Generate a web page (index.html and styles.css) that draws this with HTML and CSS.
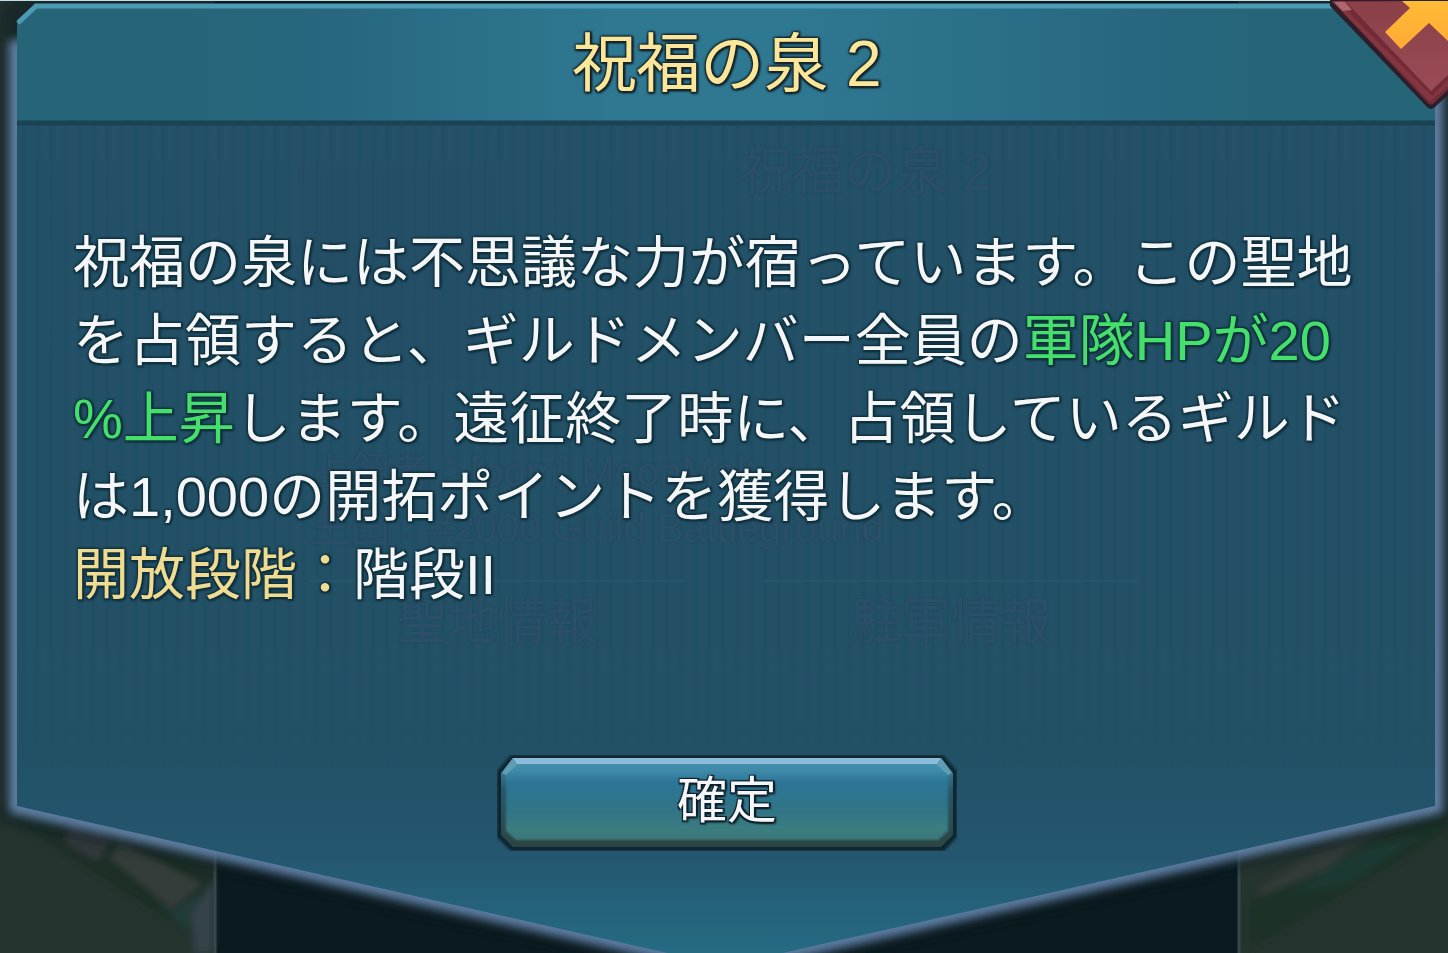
FILE: index.html
```
<!DOCTYPE html>
<html lang="ja">
<head>
    <meta charset="UTF-8">
    <meta name="viewport" content="width=device-width, initial-scale=1.0">
    <title>祝福の泉 2</title>
    <link rel="stylesheet" href="styles.css">
</head>
<body>

<div id="stage">
    <svg class="scene" viewBox="0 0 1448 953" preserveAspectRatio="none" aria-hidden="true">
        <defs>
            <linearGradient id="panel-fill" x1="0" y1="0" x2="0" y2="966" gradientUnits="userSpaceOnUse">
                <stop offset="0" stop-color="#225168"/>
                <stop offset="0.78" stop-color="#225166"/>
                <stop offset="0.88" stop-color="#24566e"/>
                <stop offset="1" stop-color="#266d86"/>
            </linearGradient>
            <linearGradient id="header-fill" x1="0" y1="0" x2="1" y2="0">
                <stop offset="0" stop-color="#266577"/>
                <stop offset="0.1" stop-color="#266577"/>
                <stop offset="0.22" stop-color="#27677f"/>
                <stop offset="0.42" stop-color="#2f7892"/>
                <stop offset="0.55" stop-color="#2f7892"/>
                <stop offset="0.8" stop-color="#27677f"/>
                <stop offset="0.9" stop-color="#266577"/>
                <stop offset="1" stop-color="#266577"/>
            </linearGradient>
            <linearGradient id="stripe-fade" x1="0" y1="0" x2="0" y2="1">
                <stop offset="0" stop-color="#fff"/>
                <stop offset="0.8" stop-color="#fff"/>
                <stop offset="1" stop-color="#000"/>
            </linearGradient>
            <pattern id="stripes" width="14" height="20" patternUnits="userSpaceOnUse">
                <rect width="5" height="20" fill="#30566d" opacity="0.2"/>
                <rect x="8" width="3" height="20" fill="#1c4b5c" opacity="0.15"/>
            </pattern>
            <mask id="stripe-mask">
                <rect x="17" y="126" width="1418" height="650" fill="url(#stripe-fade)"/>
            </mask>
            <filter id="glow" x="-5%" y="-5%" width="110%" height="110%">
                <feGaussianBlur stdDeviation="5"/>
            </filter>
            <filter id="soft"><feGaussianBlur stdDeviation="3"/></filter>
        </defs>

        <!-- ground behind the panel -->
        <rect width="1448" height="953" fill="#0b1a1f"/>
        <rect width="215" height="953" fill="#26342f"/>
        <rect x="1238" width="210" height="953" fill="#26342f"/>
        <g filter="url(#soft)">
            <path d="M0 812L215 950V860L17 800z" fill="#1c2e25"/>
            <path d="M64 842L72 822L112 838L100 860L92 859z" fill="#30393a"/>
            <path d="M110 858L120 842L202 884L172 909z" fill="#343c3b"/>
            <path d="M146 892L172 912L200 890L190 934z" fill="#213b37"/>
            <path d="M192 912L213 880V953H194z" fill="#35434a"/>
            <path d="M1250 950L1448 832V806L1250 900z" fill="#1d3026"/>
            <path d="M1258 888L1320 850L1372 832L1330 868L1262 896z" fill="#323a39"/>
            <path d="M1290 894L1360 850L1426 832L1350 884z" fill="#1e3933"/>
        </g>
        <path d="M215 840V953M1239 840V953" stroke="#34464e" stroke-width="3"/>

        <!-- panel -->
        <path d="M17 20L35 4H1435V806L725 966L17 806z" fill="none" stroke="#0c1a20" stroke-width="36" opacity="0.5" filter="url(#glow)"/>
        <path d="M17 40V806L725 966L1435 806V20" fill="none" stroke="#6d90bb" stroke-width="16" opacity="0.85" filter="url(#glow)"/>
        <path d="M17 20L35 4H1435V806L725 966L17 806z" fill="url(#panel-fill)"/>
        <rect x="17" y="126" width="1418" height="650" fill="url(#stripes)" mask="url(#stripe-mask)"/>
        <rect x="294" y="164" width="204" height="220" fill="#284b66" stroke="#2b4f68" stroke-width="6" opacity="0.25"/>
        <path d="M17 22L36 5H1435V122H17z" fill="url(#header-fill)"/>
        <path d="M18 23L36 6H1435" fill="none" stroke="#4d9ab4" stroke-width="5"/>
        <path d="M17 123H1435" stroke="#1c4353" stroke-width="5"/>
        <path d="M0 0H1448" stroke="#c3dde4" stroke-width="2"/>
    </svg>

    <!-- the dialog underneath shows through faintly -->
    <div class="under" aria-hidden="true">
        <div class="under-title">祝福の泉 2</div>
        <div class="under-info">
            <div>占領者：[oom] MoonMelt</div>
            <div>王国：#2000 Guild Battleground</div>
        </div>
        <div class="under-tabs">
            <div>聖地情報</div>
            <div>駐軍情報</div>
        </div>
    </div>

    <div class="dialog" role="dialog" aria-labelledby="dialog-title">
        <h1 id="dialog-title">祝福の泉 2</h1>
        <div class="message">
            <p>祝福の泉には不思議な力が宿っています。この聖地<br>を占領すると、ギルドメンバー全員の<span class="bonus">軍隊HPが20<br>%上昇</span>します。遠征終了時に、占領しているギルド<br>は1,000の開拓ポイントを獲得します。</p>
            <p><span class="label">開放段階：</span>階段II</p>
        </div>
        <button id="ok-button">
            <svg viewBox="0 0 460 96" preserveAspectRatio="none" aria-hidden="true">
                <defs>
                    <linearGradient id="ok-fill" x1="0" y1="0" x2="0" y2="1">
                        <stop offset="0" stop-color="#4691ad"/>
                        <stop offset="0.12" stop-color="#3f8aa9"/>
                        <stop offset="0.28" stop-color="#2d7496"/>
                        <stop offset="0.6" stop-color="#307487"/>
                        <stop offset="0.85" stop-color="#3b7c80"/>
                        <stop offset="1" stop-color="#3a7878"/>
                    </linearGradient>
                    <linearGradient id="ok-edge" x1="0" y1="0" x2="0" y2="1">
                        <stop offset="0" stop-color="#4c93ae"/>
                        <stop offset="0.35" stop-color="#28586a"/>
                        <stop offset="1" stop-color="#2c4443"/>
                    </linearGradient>
                    <filter id="ok-soft"><feGaussianBlur stdDeviation="1"/></filter>
                </defs>
                <path d="M14 0H446L460 16V82L447 96H14L0 82V16z" fill="#0c2630" filter="url(#ok-soft)"/>
                <path d="M16 3H444L456 18V80L444 92H16L4 80V18z" fill="url(#ok-edge)"/>
                <path d="M19 6H441L451 18V76L441 85H19L9 76V18z" fill="url(#ok-fill)" filter="url(#ok-soft)"/>
                <path d="M16 3H444L440 9H20z" fill="#8dbcdb"/>
                <path d="M16 3L20 10L9 20L5 18zM444 3L440 10L451 20L455 18z" fill="#5f9db5"/>
            </svg>
            <span>確定</span>
        </button>
    </div>

    <button id="close-button" aria-label="閉じる">
        <svg viewBox="0 0 118 112" aria-hidden="true">
            <defs>
                <linearGradient id="close-fill" x1="0" y1="0" x2="0" y2="1">
                    <stop offset="0" stop-color="#8b4047"/>
                    <stop offset="1" stop-color="#994c56"/>
                </linearGradient>
                <linearGradient id="cross-fill" x1="0" y1="0" x2="0" y2="1">
                    <stop offset="0" stop-color="#ffbb36"/>
                    <stop offset="1" stop-color="#ffaa35"/>
                </linearGradient>
            </defs>
            <path d="M-2 0L0 6L97 107Q101 111 105 107L118 95V0z" fill="#2b1f2a"/>
            <path d="M2 1L98 103Q101 106 104 103L118 90V1z" fill="#722b37"/>
            <path d="M2 1L9 3L102 96L118 80V86L101 101L98 100z" fill="#843640"/>
            <path d="M4 2L9 1L16 2L101 91L118 75V1z" fill="url(#close-fill)"/>
            <path d="M4 2H15L22 10L13 11z" fill="#b0666f"/>
            <path d="M72 1L80 8L55 32L71 49L99 23L118 41V1z" fill="url(#cross-fill)"/>
        </svg>
    </button>
</div>

<script>
    document.querySelectorAll('#ok-button, #close-button').forEach(button => {
        button.addEventListener('click', () => {
            document.querySelector('.dialog').classList.add('closed');
        });
    });
</script>
</body>
</html>
```
FILE: styles.css
```
* {
    box-sizing: border-box;
}
body {
    margin: 0;
    background: #0b1a1f;
    font-family: "Liberation Sans", "Noto Sans CJK JP", sans-serif;
    color: #f4f6f8;
}
#stage {
    position: relative;
    min-height: 100vh;
    overflow: hidden;
}
.scene {
    position: absolute;
    inset: 0;
    width: 100%;
    height: 100%;
}
.under {
    position: absolute;
    inset: 0;
    padding: 140px 310px 0;
    color: #2b4f68;
    text-shadow: 0 0 2px #1c475a;
}
.under-title {
    padding-left: 430px;
    font-size: 52px;
    line-height: 64px;
}
.under-info {
    margin-top: 240px;
    font-size: 40px;
    line-height: 56px;
    white-space: nowrap;
}
.under-tabs {
    display: flex;
    gap: 80px;
    margin-top: 24px;
    font-size: 50px;
    line-height: 80px;
    text-align: center;
}
.under-tabs div {
    flex: 1;
    border-top: 2px solid #25566b;
}
.dialog {
    position: relative;
    display: flex;
    flex-direction: column;
    align-items: center;
    margin: 0 13px 0 19px;
}
.dialog.closed {
    display: none;
}
h1 {
    margin: 0;
    font-size: 64px;
    font-weight: 400;
    line-height: 128px;
    color: #fbe79a;
    text-shadow: 2px 2px 2px #15242a, -1px -1px 2px #15242a, 2px -1px 2px #15242a, -1px 2px 2px #15242a;
}
.message {
    align-self: stretch;
    padding: 96px 54px 0;
    font-size: 56px;
    line-height: 78px;
    white-space: nowrap;
    text-shadow: 2px 2px 2px #10303d, -1px -1px 2px #10303d, 2px -1px 2px #10303d, -1px 2px 2px #10303d;
}
.message p {
    margin: 0;
}
.bonus {
    color: #45e06c;
}
.label {
    color: #f0dc91;
}
button {
    padding: 0;
    border: none;
    background: none;
    font: inherit;
    color: inherit;
    cursor: pointer;
}
#ok-button {
    display: grid;
    width: 460px;
    height: 96px;
    margin-top: 141px;
    font-size: 50px;
    line-height: 92px;
    text-shadow: 2px 2px 2px #0e2029, -1px -1px 1px #0e2029, 2px -1px 1px #0e2029, -1px 2px 1px #0e2029;
}
#ok-button svg,
#ok-button span {
    grid-area: 1 / 1;
    width: 100%;
}
#ok-button svg {
    height: 96px;
}
#ok-button:hover {
    filter: brightness(1.1);
}
#close-button {
    position: absolute;
    top: 0;
    right: 0;
    width: 118px;
    height: 112px;
}
#close-button svg {
    display: block;
    width: 100%;
}
```
